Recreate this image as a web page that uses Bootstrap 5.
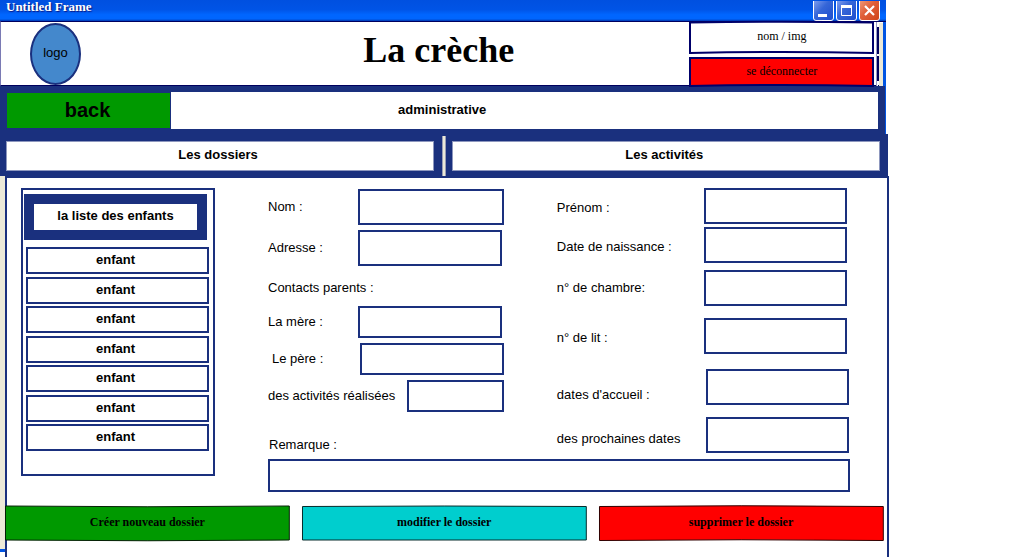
<!DOCTYPE html>
<html lang="fr">
<head>
<meta charset="utf-8">
<meta name="viewport" content="width=device-width, initial-scale=1">
<title>La crèche</title>
<link href="https://cdn.jsdelivr.net/npm/bootstrap@5.3.0/dist/css/bootstrap.min.css" rel="stylesheet">
<style>
:root { --navy: #1a307e; --ink: #00005e; --beige: #ece9d8; --sky: #0054e3; }
body { font: 13px/20px "Liberation Sans", Arial, sans-serif; color: #000; background: #fff; }
button { color: #000; padding: 0; border: 0; background: none; }
.serif { font-family: "Liberation Serif", "Times New Roman", serif; }
.app-window { width: 86%; min-height: 100vh; }
.upper { margin-right: 2px; }

/* title bar */
.title-bar { height: 21px; padding: 0 6px; background: linear-gradient(#0050e0, #0054e6 45%, #0066ff 70%, #0066fe 90%, #0038b0); }
.title-text { color: #fff; font-weight: bold; line-height: 14px; text-shadow: 1px 1px 1px #0a1883; }
.win-controls { gap: 2px; }
.win-controls svg { display: block; }

/* header */
.page-head { display: grid; grid-template-columns: 187px 1fr 197px; height: 65px; border: 1px solid var(--ink); border-width: 1px 0 1px 1px; border-left-color: #7a7ab4; }
.logo-oval { width: 51px; height: 62px; margin: 1px 0 0 29px; padding-bottom: 2px; border: 2px solid var(--navy); border-radius: 50%; background: #4488cc; }
.page-title { font-size: 36px; font-weight: bold; line-height: 56px; }
.account { gap: 3px; width: 185px; margin-top: -1px; }
.account button, .actions button { position: relative; font-size: 12px; }
.account button { height: 33px; line-height: 28px; padding-bottom: 4px; }
.account .logout { height: 30px; line-height: 28px; padding-bottom: 2px; }
.bowed { position: absolute; inset: 0; width: 100%; height: 100%; overflow: visible; }
.bowed path { vector-effect: non-scaling-stroke; }
.head-edge { width: 10px; height: 64px; margin-left: 2px; }

/* navigation */
.section-bar { height: 48px; padding: 6px 7px 5px 7px; background: var(--navy); border-right: 1px solid var(--sky); }
.back-btn { width: 163px; margin: 1px 1px 1px 0; padding: 0 2px 2px 0; background: #009900; font-size: 20px; font-weight: bold; }
.section-name { background: #fff; font-weight: bold; padding: 0 165px 2px 0; }
.tab-bar { background: var(--navy); height: 42px; }
.tab-cell { flex: 1 1 0; padding: 7px 8px 7px 6px; }
.tab-cell + .tab-cell { padding-left: 7px; }
.tab-cell button { background: #fff; border: 1px solid #8d97be; font-weight: bold; height: 30px; padding: 0 4px 2px 0; line-height: 26px; }
.tab-split { width: 4px; margin-top: 2px; background: var(--beige); border: 1px solid #9b9fb5; border-width: 0 1px; }

/* body */
.side-strip { flex: 0 0 5px; margin-bottom: 5px; background: var(--beige); border-bottom: 3px solid var(--sky); }
.panel { min-width: 0; margin-right: -1px; border: 2px solid var(--navy); border-bottom: 0; padding-top: 10px; }
.kids { width: 194px; height: 288px; margin-left: 14px; border: 2px solid var(--navy); padding: 4px 4px 0 1px; }
.kids h2 { border: 10px solid var(--navy); margin: 0 2px 7px 0; font-size: 13px; font-weight: bold; line-height: 24px; height: 46px; }
.kids ul { padding-left: 2px; }
.kids li:nth-child(even) { margin-top: 3px; }
.kids li:nth-child(odd):not(:first-child) { margin-top: 2px; }
.kids button { width: 100%; height: 27px; border: 2px solid var(--navy); padding: 0 4px 2px 0; font-weight: bold; line-height: 20px; display: block; }

.record { min-width: 0; margin: 0 37px 0 53px; }
.columns { gap: 53px; height: 266px; }
.col-left, .col-right { min-width: 0; }
.col-left { flex: 237 1 0; gap: 5px; padding-top: 1px; }
.col-right { flex: 292 1 0; padding-right: 3px; }
.field { height: 36px; flex-shrink: 0; }
.field.short { height: 32px; }
.heading-row { height: 30px; line-height: 34px; flex-shrink: 0; }
.record input { width: 0; min-width: 0; border: 2px solid var(--navy); border-radius: 0; padding: 0 6px; height: 100%; background: #fff; }
.record label { flex-shrink: 0; }
.col-left label { width: 90px; }
.col-left .lbl-indent { width: 92px; padding-left: 4px; }
.col-left .lbl-long { width: 139px; }
.col-right label { width: 147px; }
.col-right .shifted { margin-right: -2px; }
.col-right .shifted label { width: 149px; }
.inset-end { padding-right: 2px; }
.gap-tight { margin-top: 3px; }
.gap-near { margin-top: 7px; }
.gap-wide { margin-top: 12px; }
.gap-wider { margin-top: 15px; }
.note-label { margin-top: 18px; padding-left: 1px; }
.record .note { height: 33px; margin-top: 5px; }

.actions { gap: 12px; margin: 13px 4px 0 -2px; }
.actions button { flex: 1 1 0; height: 36px; font-weight: bold; line-height: 32px; padding-bottom: 2px; }
</style>
</head>
<body>
<div class="app-window d-flex flex-column">
  <div class="upper">
    <div class="title-bar d-flex justify-content-between">
      <span class="title-text serif">Untitled Frame</span>
      <div class="win-controls d-flex">
        <button type="button" aria-label="Réduire"><svg width="21" height="20"><defs><linearGradient id="gb" x2="1" y2="1"><stop stop-color="#8aa5f0"/><stop offset=".45" stop-color="#3566d8"/><stop offset="1" stop-color="#1c4ccc"/></linearGradient><linearGradient id="gr" x2="1" y2="1"><stop stop-color="#f0a080"/><stop offset=".45" stop-color="#e0603a"/><stop offset="1" stop-color="#d04418"/></linearGradient></defs><rect x=".5" y="-2.500" width="20" height="22" rx="2.500" fill="url(#gb)" stroke="#fff"/><path fill="#fff" d="M5 13h9v3H5z"/></svg></button>
        <button type="button" aria-label="Agrandir"><svg width="21" height="20"><rect x=".5" y="-2.500" width="20" height="22" rx="2.500" fill="url(#gb)" stroke="#fff"/><path d="M5.500 5.500h10v9h-10z" fill="none" stroke="#fff"/><path fill="#fff" d="M5 4h11v3H5z"/></svg></button>
        <button type="button" aria-label="Fermer"><svg width="21" height="20"><rect x=".5" y="-2.500" width="20" height="22" rx="2.500" fill="url(#gr)" stroke="#fff"/><path d="M6 5l9 9M15 5l-9 9" stroke="#fff" stroke-width="2.200"/></svg></button>
      </div>
    </div>

    <header class="page-head">
      <div class="logo-oval d-flex align-items-center justify-content-center"><span>logo</span></div>
      <h1 class="page-title serif text-center m-0">La crèche</h1>
      <div class="d-flex">
        <div class="account d-flex flex-column serif">
          <button type="button"><svg class="bowed" viewBox="0 0 185 33" preserveAspectRatio="none" aria-hidden="true"><path d="M1 1.500Q92 0 184 1.500V32Q92 30 1 32Z" fill="#fff" stroke="#00006a" stroke-width="2"/></svg><span class="position-relative">nom / img</span></button>
          <button type="button" class="logout"><svg class="bowed" viewBox="0 0 185 30" preserveAspectRatio="none" aria-hidden="true"><path d="M1 1H184V29Q92 27 1 29Z" fill="#f00" stroke="#00006a" stroke-width="2"/></svg><span class="position-relative">se déconnecter</span></button>
        </div>
        <svg class="head-edge" viewBox="0 0 10 64" preserveAspectRatio="none" aria-hidden="true"><path fill="#ece9d8" d="M3 1h4v63H3z"/><path fill="#0054e3" d="M7 0h3v64H7z"/><path fill="#9a9ac6" d="M0 0h1v64H0z"/><path fill="#fff" d="M1 0h1v64H1z"/><path fill="#00005e" d="M1 5h2v27H1zM1 34h2v25H1z"/></svg>
      </div>
    </header>

    <div class="section-bar d-flex">
      <button type="button" class="back-btn">back</button>
      <div class="section-name flex-grow-1 d-flex align-items-center justify-content-center"><span>administrative</span></div>
    </div>
  </div>

  <nav class="tab-bar d-flex" aria-label="Sections">
    <div class="tab-cell"><button type="button" class="w-100">Les dossiers</button></div>
    <div class="tab-split"></div>
    <div class="tab-cell"><button type="button" class="w-100">Les activités</button></div>
  </nav>

  <div class="d-flex flex-grow-1">
    <div class="side-strip"></div>
    <main class="panel flex-grow-1">
      <div class="d-flex">
        <aside class="kids flex-shrink-0">
          <h2 class="text-center">la liste des enfants</h2>
          <ul class="list-unstyled m-0">
            <li><button type="button">enfant</button></li>
            <li><button type="button">enfant</button></li>
            <li><button type="button">enfant</button></li>
            <li><button type="button">enfant</button></li>
            <li><button type="button">enfant</button></li>
            <li><button type="button">enfant</button></li>
            <li><button type="button">enfant</button></li>
          </ul>
        </aside>

        <form class="record flex-grow-1">
          <div class="columns d-flex">
            <div class="col-left d-flex flex-column">
              <div class="field d-flex align-items-center"><label for="nom">Nom :</label><input id="nom" class="flex-fill" type="text"></div>
              <div class="field inset-end d-flex align-items-center"><label for="adresse">Adresse :</label><input id="adresse" class="flex-fill" type="text"></div>
              <div class="heading-row">Contacts parents :</div>
              <div class="field short inset-end d-flex align-items-center"><label for="mere">La mère :</label><input id="mere" class="flex-fill" type="text"></div>
              <div class="field short d-flex align-items-center"><label for="pere" class="lbl-indent">Le père :</label><input id="pere" class="flex-fill" type="text"></div>
              <div class="field short d-flex align-items-center"><label for="activites" class="lbl-long">des activités réalisées</label><input id="activites" class="flex-fill" type="text"></div>
              <label for="remarque" class="note-label">Remarque :</label>
            </div>
            <div class="col-right">
              <div class="field d-flex align-items-center"><label for="prenom" class="pt-1">Prénom :</label><input id="prenom" class="flex-fill" type="text"></div>
              <div class="field gap-tight d-flex align-items-center"><label for="naissance" class="pt-1">Date de naissance :</label><input id="naissance" class="flex-fill" type="text"></div>
              <div class="field gap-near d-flex align-items-center"><label for="chambre">n° de chambre:</label><input id="chambre" class="flex-fill" type="text"></div>
              <div class="field gap-wide d-flex align-items-center"><label for="lit" class="pt-1">n° de lit :</label><input id="lit" class="flex-fill" type="text"></div>
              <div class="field gap-wider shifted d-flex align-items-end"><label for="accueil">dates d'accueil :</label><input id="accueil" class="flex-fill" type="text"></div>
              <div class="field gap-wide shifted d-flex align-items-center"><label for="prochaines" class="pt-2">des prochaines dates</label><input id="prochaines" class="flex-fill" type="text"></div>
            </div>
          </div>
          <input id="remarque" class="note w-100 d-block" type="text">
        </form>
      </div>

      <div class="actions d-flex serif">
        <button type="button"><svg class="bowed" viewBox="0 0 285 36" preserveAspectRatio="none" aria-hidden="true"><path d="M.5 1Q142 2.500 284.500 1V35Q142 36.500 .5 35Z" fill="#009900" stroke="#052005"/></svg><span class="position-relative">Créer nouveau dossier</span></button>
        <button type="button"><svg class="bowed" viewBox="0 0 285 36" preserveAspectRatio="none" aria-hidden="true"><path d="M.5 1.500Q142 .5 284.500 1.500V35H.5Z" fill="#00cece" stroke="#062c2c"/></svg><span class="position-relative">modifier le dossier</span></button>
        <button type="button"><svg class="bowed" viewBox="0 0 285 36" preserveAspectRatio="none" aria-hidden="true"><path d="M.5 1.500Q142 0 284.500 1.500V35.500Q142 34 .5 35.500Z" fill="#f00" stroke="#300000"/></svg><span class="position-relative">supprimer le dossier</span></button>
      </div>
    </main>
  </div>
</div>
<script src="https://cdn.jsdelivr.net/npm/bootstrap@5.3.0/dist/js/bootstrap.bundle.min.js"></script>
</body>
</html>
